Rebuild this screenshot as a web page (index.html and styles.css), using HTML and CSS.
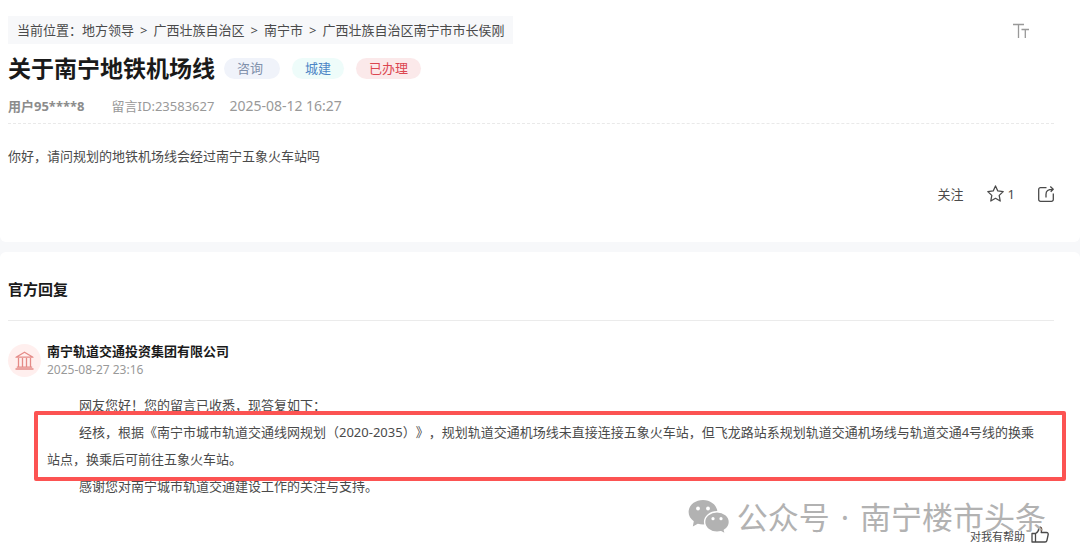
FILE: index.html
```html
<!DOCTYPE html>
<html lang="zh-CN">
<head>
<meta charset="utf-8">
<title>关于南宁地铁机场线</title>
<meta name="viewport" content="width=device-width, initial-scale=1">
<link rel="stylesheet" href="styles.css">
</head>
<body>

<div class="page">
  <section class="card message">
    <div class="topbar">
      <nav class="crumb">
        当前位置：<a href="#">地方领导</a><i>&gt;</i><a href="#">广西壮族自治区</a><i>&gt;</i><a href="#">南宁市</a><i>&gt;</i><a href="#">广西壮族自治区南宁市市长侯刚</a>
      </nav>
      <button class="font-btn" type="button" aria-label="字号">
        <svg width="16" height="16" viewBox="0 0 16 16"><path d="M0 2.500h11M5.500 2.500V16M8.500 7.500H16M12.300 7.500V16"/></svg>
      </button>
    </div>

    <div class="title-row">
      <h1>关于南宁地铁机场线</h1>
      <span class="tag tag-ask">咨询</span>
      <span class="tag tag-city">城建</span>
      <span class="tag tag-done">已办理</span>
    </div>

    <div class="meta">
      <b>用户95****8</b>
      <span>留言ID:23583627</span>
      <time>2025-08-12 16:27</time>
    </div>

    <p class="question">你好，请问规划的地铁机场线会经过南宁五象火车站吗</p>

    <div class="actions">
      <button type="button">关注</button>
      <button type="button">
        <svg width="17" height="18" viewBox="0 0 17 18"><path d="M8.500 .9l2.300 5 5.400.7-4 3.800 1 5.600-4.700-2.700L3.800 16l1-5.600-4-3.800 5.400-.7z"/></svg>1
      </button>
      <button type="button" aria-label="分享">
        <svg width="16" height="16" viewBox="0 0 16 16"><path d="M8.500 1.700H2.500a1.800 1.800 0 0 0-1.800 1.800v10a1.800 1.800 0 0 0 1.800 1.800h11a1.800 1.800 0 0 0 1.800-1.800V7.500M8 11.500V8.200C8 5 10 3.300 14.800 3.300M12.300.6l2.900 2.700-2.500 2.500"/></svg>
      </button>
    </div>
  </section>

  <section class="card reply">
    <h2>官方回复</h2>

    <div class="author">
      <span class="avatar">
        <svg width="19" height="19" viewBox="0 0 19 19"><path d="M1 6.200L9.500 1.200 18 6.200zM3.500 7v9M7.500 7v9M11.500 7v9M15.500 7v9M1.800 16.200h15.400M.5 18h18"/></svg>
      </span>
      <div>
        <h3>南宁轨道交通投资集团有限公司</h3>
        <time>2025-08-27 23:16</time>
      </div>
    </div>

    <div class="answer">
      <p>网友您好！您的留言已收悉，现答复如下：</p>
      <p class="marked">经核，根据《南宁市城市轨道交通线网规划（2020-2035）》，规划轨道交通机场线未直接连接五象火车站，但飞龙路站系规划轨道交通机场线与轨道交通4号线的换乘站点，换乘后可前往五象火车站。</p>
      <p>感谢您对南宁城市轨道交通建设工作的关注与支持。</p>
    </div>

    <div class="helpful">
      <button type="button">对我有帮助
        <svg width="18" height="24" viewBox="0 0 18 24"><path d="M1 8.500h3.500v8.500H1zM4.500 8.500C6.500 7.500 7.600 6 7.800 3.600 8 1.400 11 1.800 10.700 4.800L10.200 7.500h5.300c1.300 0 1.900.8 1.700 2l-1.300 6c-.2 1-.9 1.500-1.800 1.500H4.500"/></svg>
      </button>
    </div>
  </section>

  <div class="watermark">
    <svg width="42" height="36" viewBox="0 0 42 36">
      <path d="M15 1C7 1 .6 6.300.6 13c0 3.800 2 7 5.200 9.200L4.800 27.500l5-2.700c1.700.5 3.400.7 5.200.7 8 0 14.400-5.500 14.400-12.200S23 1 15 1z"/>
      <path class="front" d="M41.400 23c0-5.600-5.600-10.200-12.400-10.200S16.600 17.400 16.600 23 22.200 33.200 29 33.200c1.400 0 2.800-.2 4-.5l4.600 2.500-1.200-4c3.100-1.900 5-4.800 5-8.200z"/>
      <g fill="#fff"><circle cx="10" cy="9.500" r="1.900"/><circle cx="20" cy="9.500" r="1.900"/><circle cx="25" cy="19.700" r="1.600"/><circle cx="33" cy="19.700" r="1.600"/></g>
    </svg>
    <span>公众号</span><span class="dot">·</span><span>南宁楼市头条</span>
  </div>
</div>

</body>
</html>
```
FILE: styles.css
```css
* { box-sizing: border-box; }
body {
  margin: 0;
  background: #fff;
  color: #4a4a4a;
  font: 13px/20px "Noto Sans", "Noto Sans CJK SC", sans-serif;
}
h1, h2, h3, p { margin: 0; }
h1, h2, h3 { color: #1a1a1a; font-weight: bold; }
a { color: inherit; text-decoration: none; }
button {
  display: flex;
  align-items: center;
  padding: 0;
  border: 0;
  background: none;
  color: inherit;
  font: inherit;
  cursor: pointer;
}
svg { display: block; flex: none; }
button svg, .avatar svg { fill: none; stroke: currentColor; stroke-width: 1.3; stroke-linejoin: round; }

.page { position: relative; background: #f7f8fa; }
.card { background: #fff; padding: 0 26px 0 8px; }
.message { padding-top: 16px; padding-bottom: 38px; border-radius: 0 0 6px 6px; }
.reply { margin-top: 10px; padding-top: 25px; padding-bottom: 12px; border-radius: 6px 6px 0 0; }

/* top */
.topbar { display: flex; justify-content: space-between; align-items: center; }
.crumb { padding: 4px 9px; background: #f7f8fa; }
.crumb i { margin: 0 6px; font-style: normal; }
.font-btn { margin-right: 25px; color: #999; }

.title-row { display: flex; align-items: center; height: 34px; margin-top: 7px; }
.title-row h1 { margin-right: 9px; font-size: 23px; line-height: 34px; }
.tag { margin-right: 12px; padding: 0 13px; border-radius: 11px; line-height: 21px; }
.tag-ask { padding-right: 17px; background: #f0f3fa; color: #8090ab; }
.tag-city { background: #eefcfa; color: #4c86c6; }
.tag-done { background: #fbe9ea; color: #dc4650; }

.meta {
  display: flex;
  align-items: center;
  padding: 11px 0 7px;
  border-bottom: 1px dashed #e9e9e9;
  color: #999;
}
.meta b { margin-right: 27px; color: #8c8c8c; }
.meta span { margin-right: 15px; }
.meta time { font-size: 14px; }

.question { margin-top: 22px; }
.actions { display: flex; justify-content: flex-end; align-items: center; gap: 23px; margin-top: 18px; }
.actions button { gap: 4px; }

/* reply */
.reply h2 { padding-bottom: 19px; border-bottom: 1px solid #ebebeb; font-size: 15px; line-height: 24px; }
.author { display: flex; align-items: center; gap: 6px; margin-top: 20px; }
.author h3 { font-size: 13px; line-height: 20px; }
.author time { display: block; color: #999; font-size: 12px; line-height: 18px; }
.avatar {
  display: flex;
  align-items: center;
  justify-content: center;
  width: 33px;
  height: 33px;
  border-radius: 50%;
  background: #ffefee;
  color: #e58a86;
}
.answer { margin: 13px 0 0 39px; line-height: 27px; text-spacing-trim: space-all; }
.answer p { text-indent: 32px; }
.answer .marked { position: relative; padding-right: 8px; }
/* red frame round the key paragraph */
.marked::after {
  content: "";
  position: absolute;
  top: -8px;
  right: -12px;
  bottom: -8px;
  left: -13px;
  border: 4px solid #fc5352;
  border-radius: 2px;
}

.helpful { display: flex; justify-content: flex-end; margin-top: 25px; padding-right: 5px; font-size: 11px; }
.helpful button { gap: 6px; }

.watermark {
  position: absolute;
  right: 34px;
  bottom: 21px;
  display: flex;
  align-items: center;
  color: #b2b2b2;
  font-size: 31px;
  line-height: 46px;
  pointer-events: none;
}
.watermark svg { margin-right: 7px; fill: #b2b2b2; }
.watermark .front { stroke: #fff; stroke-width: 1.4; }
.watermark .dot { margin: 0 11px; }
```
